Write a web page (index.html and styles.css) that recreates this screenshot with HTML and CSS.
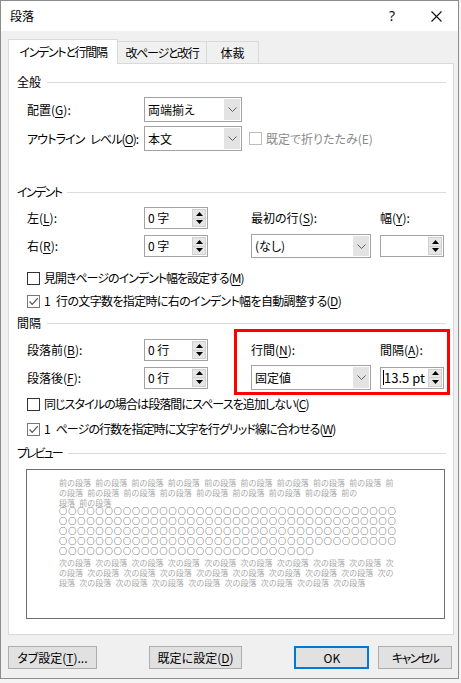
FILE: index.html
```html
<!DOCTYPE html>
<html lang="ja">
<head>
<meta charset="utf-8">
<title>段落</title>
<link rel="stylesheet" href="styles.css">
</head>
<body>
<div class="dialog">
  <div class="titlebar">
    <span class="title">段落</span>
    <div class="caption-btns">
      <span class="cap-btn help">?</span>
      <span class="cap-btn close"><svg width="11" height="11" viewBox="0 0 11 11"><path d="M0.5 0.5 L10.5 10.5 M10.5 0.5 L0.5 10.5" stroke="#111" stroke-width="1.1" fill="none"/></svg></span>
    </div>
  </div>
  <div class="body">
    <div class="tabs">
      <div class="tab active t1"><span class="tl1">インデントと行間隔</span></div>
      <div class="tab t2"><span class="tl2">改ページと改行</span></div>
      <div class="tab t3">体裁</div>
    </div>
    <div class="panel">
      <div class="group-head h-general"><span>全般</span></div>
      <div class="grid grid-general">
        <div class="lbl">配置(<u>G</u>):</div>
        <div class="select w98"><span class="val">両端揃え</span><span class="dd"><svg width="9" height="5" viewBox="0 0 9 5"><path d="M0.5 0.5 L4.5 4.5 L8.5 0.5" stroke="#606060" fill="none"/></svg></span></div>
        <div></div><div></div>
        <div class="lbl outline">アウトライン レベル(<u>O</u>):</div>
        <div class="select w98"><span class="val">本文</span><span class="dd"><svg width="9" height="5" viewBox="0 0 9 5"><path d="M0.5 0.5 L4.5 4.5 L8.5 0.5" stroke="#606060" fill="none"/></svg></span></div>
        <div class="check disabled span2"><span class="box"></span><span>既定で折りたたみ(E)</span></div>
      </div>

      <div class="group-head h-indent"><span class="kana">インデント</span></div>
      <div class="grid grid-indent">
        <div class="lbl">左(<u>L</u>):</div>
        <div class="spin"><span class="val">0 字</span><span class="btns"><span class="sb"><svg width="7" height="4" viewBox="0 0 7 4"><polygon points="0,4 3.5,0 7,4" fill="#000"/></svg></span><span class="sb"><svg width="7" height="4" viewBox="0 0 7 4"><polygon points="0,0 3.5,4 7,0" fill="#000"/></svg></span></span></div>
        <div class="lbl">最初の行(<u>S</u>):</div>
        <div class="lbl">幅(<u>Y</u>):</div>
        <div class="lbl">右(<u>R</u>):</div>
        <div class="spin"><span class="val">0 字</span><span class="btns"><span class="sb"><svg width="7" height="4" viewBox="0 0 7 4"><polygon points="0,4 3.5,0 7,4" fill="#000"/></svg></span><span class="sb"><svg width="7" height="4" viewBox="0 0 7 4"><polygon points="0,0 3.5,4 7,0" fill="#000"/></svg></span></span></div>
        <div class="select w120 h24"><span class="val">(なし)</span><span class="dd"><svg width="9" height="5" viewBox="0 0 9 5"><path d="M0.5 0.5 L4.5 4.5 L8.5 0.5" stroke="#606060" fill="none"/></svg></span></div>
        <div class="spin"><span class="val"></span><span class="btns"><span class="sb"><svg width="7" height="4" viewBox="0 0 7 4"><polygon points="0,4 3.5,0 7,4" fill="#000"/></svg></span><span class="sb"><svg width="7" height="4" viewBox="0 0 7 4"><polygon points="0,0 3.5,4 7,0" fill="#000"/></svg></span></span></div>
      </div>
      <div class="checks checks-indent">
        <div class="check c1"><span class="box"></span><span>見開きページのインデント幅を設定する(<u>M</u>)</span></div>
        <div class="check c2"><span class="box checked"><svg width="11" height="11" viewBox="0 0 11 11"><path d="M1.5 5.5 L4.2 8.3 L9.8 2.2" stroke="#555" stroke-width="1.2" fill="none"/></svg></span><span>1 行の文字数を指定時に右のインデント幅を自動調整する(<u>D</u>)</span></div>
      </div>

      <div class="group-head h-spacing"><span>間隔</span></div>
      <div class="grid grid-spacing">
        <div class="lbl">段落前(<u>B</u>):</div>
        <div class="spin"><span class="val">0 行</span><span class="btns"><span class="sb"><svg width="7" height="4" viewBox="0 0 7 4"><polygon points="0,4 3.5,0 7,4" fill="#000"/></svg></span><span class="sb"><svg width="7" height="4" viewBox="0 0 7 4"><polygon points="0,0 3.5,4 7,0" fill="#000"/></svg></span></span></div>
        <div class="lbl">行間(<u>N</u>):</div>
        <div class="lbl">間隔(<u>A</u>):</div>
        <div class="lbl">段落後(<u>F</u>):</div>
        <div class="spin"><span class="val">0 行</span><span class="btns"><span class="sb"><svg width="7" height="4" viewBox="0 0 7 4"><polygon points="0,4 3.5,0 7,4" fill="#000"/></svg></span><span class="sb"><svg width="7" height="4" viewBox="0 0 7 4"><polygon points="0,0 3.5,4 7,0" fill="#000"/></svg></span></span></div>
        <div class="select w120"><span class="val">固定値</span><span class="dd"><svg width="9" height="5" viewBox="0 0 9 5"><path d="M0.5 0.5 L4.5 4.5 L8.5 0.5" stroke="#606060" fill="none"/></svg></span></div>
        <div class="spin tall"><span class="val pt"><span class="caret"></span>13.5 pt</span><span class="btns"><span class="sb"><svg width="7" height="4" viewBox="0 0 7 4"><polygon points="0,4 3.5,0 7,4" fill="#000"/></svg></span><span class="sb"><svg width="7" height="4" viewBox="0 0 7 4"><polygon points="0,0 3.5,4 7,0" fill="#000"/></svg></span></span></div>
        <div class="highlight"></div>
      </div>
      <div class="checks checks-spacing">
        <div class="check c3"><span class="box"></span><span>同じスタイルの場合は段落間にスペースを追加しない(<u>C</u>)</span></div>
        <div class="check c4"><span class="box checked"><svg width="11" height="11" viewBox="0 0 11 11"><path d="M1.5 5.5 L4.2 8.3 L9.8 2.2" stroke="#555" stroke-width="1.2" fill="none"/></svg></span><span>1 ページの行数を指定時に文字を行グリッド線に合わせる(<u>W</u>)</span></div>
      </div>

      <div class="group-head h-preview"><span class="kana2">プレビュー</span></div>
      <div class="preview">
        <div class="ptext prev">前の段落 前の段落 前の段落 前の段落 前の段落 前の段落 前の段落 前の段落 前の段落 前<br>の段落 前の段落 前の段落 前の段落 前の段落 前の段落 前の段落 前の段落 前の<br>段落 前の段落</div>
        <div class="circles">○○○○○○○○○○○○○○○○○○○○○○○○○○○○○○○○○○○○○<br>○○○○○○○○○○○○○○○○○○○○○○○○○○○○○○○○○○○○○<br>○○○○○○○○○○○○○○○○○○○○○○○○○○○○○○○○○○○○○<br>○○○○○○○○○○○○○○○○○○○○○○○○○○○○○○○○○○○○○<br>○○○○○○○○○○○○○○○○○○○○○○○○○○○○</div>
        <div class="ptext next">次の段落 次の段落 次の段落 次の段落 次の段落 次の段落 次の段落 次の段落 次の段落 次<br>の段落 次の段落 次の段落 次の段落 次の段落 次の段落 次の段落 次の段落 次の段落 次の<br>段落 次の段落 次の段落 次の段落 次の段落 次の段落 次の段落 次の段落 次の段落</div>
      </div>
    </div>
    <div class="btnrow">
      <div class="btn b-tab">タブ設定(<u>T</u>)...</div>
      <div class="btn b-default">既定に設定(<u>D</u>)</div>
      <div class="btn b-ok">OK</div>
      <div class="btn b-cancel"><span class="kana3">キャンセル</span></div>
    </div>
  </div>
</div>
</body>
</html>
```
FILE: styles.css
```css
* { box-sizing: border-box; }
html, body { margin: 0; padding: 0; }
body {
  width: 461px;
  height: 683px;
  overflow: hidden;
  background: #f4f4f4;
  font-family: "Noto Sans CJK JP", "Noto Sans", sans-serif;
  font-size: 12px;
  line-height: 16px;
  color: #000;
  font-feature-settings: "palt";
}
u { text-decoration: underline; text-underline-offset: 2px; }

.dialog {
  width: 459px;
  height: 679px;
  border: 1px solid #8c8c8c;
  background: #f0f0f0;
  display: flex;
  flex-direction: column;
}
.titlebar {
  height: 30px;
  background: #fff;
  display: flex;
  align-items: center;
  justify-content: space-between;
  padding-left: 9px;
  flex: none;
}
.title { font-size: 12px; }
.caption-btns { display: flex; height: 100%; }
.cap-btn {
  width: 44px;
  display: flex;
  align-items: center;
  justify-content: center;
}
.help { font-family: "Noto Sans", sans-serif; font-size: 14px; color: #111; }

.body { padding: 0 6px 0 7px; flex: 1; }

.tabs {
  display: flex;
  align-items: flex-end;
  height: 24px;
  margin-top: 8px;
  position: relative;
  z-index: 1;
}
.tab {
  height: 22px;
  border: 1px solid #d9d9d9;
  border-bottom: none;
  display: flex;
  align-items: center;
  justify-content: center;
  background: #f0f0f0;
  font-size: 12px;
  white-space: nowrap;
}
.tab.active {
  height: 25px;
  margin-bottom: -1px;
  background: #fff;
  padding-bottom: 1px;
}
.t1 { width: 110px; }
.t2 { width: 89px; border-left: none; }
.t3 { width: 52px; border-left: none; }
.tl1, .tl2 { letter-spacing: -1.3px; }

.panel {
  width: 446px;
  height: 572px;
  border: 1px solid #d9d9d9;
  background: #fff;
  padding: 0 7px 0 8px;
}

.group-head {
  display: flex;
  align-items: center;
  gap: 6px;
  height: 16px;
}
.group-head::after {
  content: "";
  flex: 1;
  height: 1px;
  background: #dcdcdc;
}
.kana { letter-spacing: -1.6px; }
.kana2 { letter-spacing: -2px; }
.kana3 { letter-spacing: -1.6px; }
.h-general { margin-top: 10px; }
.h-indent { margin-top: 33px; }
.h-spacing { margin-top: 4px; }
.h-preview { margin-top: 6px; }

.grid {
  display: grid;
  grid-template-columns: 117px 107px 129px 64px;
  margin-left: 10px;
  align-items: center;
  position: relative;
}
.grid-general { margin-top: 7px; grid-template-rows: 25px 25px; row-gap: 4px; }
.grid-indent { margin-top: 7px; grid-template-rows: 22px 24px; row-gap: 5px; }
.grid-spacing { margin-top: 8px; grid-template-rows: 22px 25px; row-gap: 4px; }
.span2 { grid-column: span 2; }
.lbl { white-space: nowrap; }
.lbl.outline { letter-spacing: -0.9px; word-spacing: 4px; }

.select {
  display: flex;
  height: 25px;
  border: 1px solid #a2a2a2;
  background: #fff;
}
.select.h24 { height: 24px; }
.w98 { width: 98px; }
.w120 { width: 120px; }
.select .val { flex: 1; padding-left: 3px; display: flex; align-items: center; }
.select .dd {
  width: 16px;
  margin: 1px;
  background: #e3e3e3;
  display: flex;
  align-items: center;
  justify-content: center;
}

.spin {
  display: flex;
  width: 64px;
  height: 22px;
  border: 1px solid #a2a2a2;
  background: #fff;
}
.spin .val { flex: 1; padding-left: 3px; display: flex; align-items: center; }
.spin .val.pt { font-size: 13px; padding-left: 2px; }
.caret { width: 1px; height: 15px; background: #000; }
.spin .btns {
  width: 15px;
  display: flex;
  flex-direction: column;
  padding: 1px 1px 1px 0;
}
.sb {
  flex: 1;
  background: #e6e6e6;
  border: 1px solid #d0d0d0;
  display: flex;
  align-items: center;
  justify-content: center;
}
.sb + .sb { border-top: none; }

.checks { margin-left: 10px; display: flex; flex-direction: column; }
.checks-indent { margin-top: 10px; gap: 3px; }
.checks-spacing { margin-top: 4px; gap: 5px; }
.check {
  display: flex;
  align-items: center;
  gap: 4px;
  height: 20px;
  white-space: nowrap;
}
.c1 span + span { letter-spacing: -1px; }
.c2 span + span { letter-spacing: -0.65px; word-spacing: 4px; }
.c3 span + span { letter-spacing: -0.9px; }
.c4 span + span { letter-spacing: -0.9px; word-spacing: 4px; }
.box {
  width: 13px;
  height: 13px;
  border: 1px solid #333;
  background: #fff;
  flex: none;
  display: flex;
  align-items: center;
  justify-content: center;
}
.box.checked { border-color: #777; }
.check.disabled { color: #8a8a8a; margin-left: -2px; }
.check.disabled .box { border-color: #bcbcbc; }

.highlight {
  position: absolute;
  left: 207px;
  top: -10px;
  width: 216px;
  height: 66px;
  border: 3px solid #ff0000;
  pointer-events: none;
}

.preview {
  margin: 8px 0 0 9px;
  width: 419px;
  height: 150px;
  border: 1px solid #6e6e6e;
  background: #fff;
  padding: 8px 0 0 32px;
  font-feature-settings: normal;
  overflow: hidden;
}
.ptext {
  font-size: 8px;
  line-height: 10px;
  color: #a8a8a8;
  word-spacing: 2.5px;
  white-space: nowrap;
}
.circles {
  font-size: 8px;
  line-height: 10px;
  letter-spacing: 1.13px;
  color: #000;
  white-space: nowrap;
  margin-top: -2px;
}
.ptext.next { margin-top: 2px; }

.btnrow { display: flex; margin-top: 11px; }
.btn {
  height: 23px;
  border: 1px solid #adadad;
  background: #e1e1e1;
  display: flex;
  align-items: center;
  justify-content: center;
  white-space: nowrap;
}
.b-tab { width: 89px; }
.b-default { width: 94px; margin-left: 52px; }
.b-ok { width: 75px; margin-left: 52px; border: 2px solid #0078d7; }
.b-cancel { width: 74px; margin-left: 9px; }
```
